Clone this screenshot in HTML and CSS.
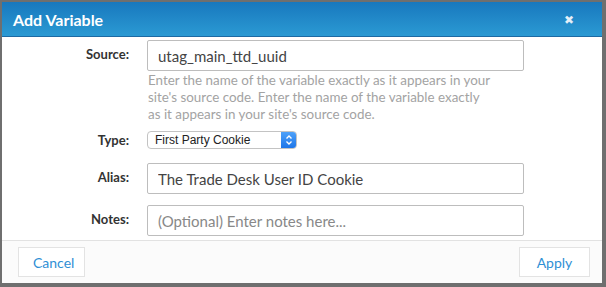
FILE: index.html
```html
<!DOCTYPE html>
<html lang="en">
  <head>
    <meta charset="UTF-8" />
    <meta name="viewport" content="width=device-width, initial-scale=1.0" />
    <title>Add Variable</title>
    <link rel="stylesheet" href="styles.css">
  </head>
  <body>
    <div class="modal">
      <div class="modal-header">
        <h1>Add Variable</h1>
        <span class="close">&#10006;</span>
      </div>
      <div class="modal-body">
        <div class="row row-source">
          <label for="source">Source:</label>
          <div class="field">
            <input type="text" id="source" value="utag_main_ttd_uuid" />
            <p class="help">Enter the name of the variable exactly as it appears in your site's source code. Enter the name of the variable exactly as it appears in your site's source code.</p>
          </div>
        </div>
        <div class="row row-type">
          <label>Type:</label>
          <div class="field">
            <div class="select">
              <span>First Party Cookie</span>
              <span class="stepper">
                <svg width="8" height="12" viewBox="0 0 8 12"><path d="M1.5 4.5 L4 2 L6.5 4.5 M1.5 7.5 L4 10 L6.5 7.5" fill="none" stroke="#fff" stroke-width="1.4"/></svg>
              </span>
            </div>
          </div>
        </div>
        <div class="row">
          <label for="alias">Alias:</label>
          <div class="field">
            <input type="text" id="alias" value="The Trade Desk User ID Cookie" />
          </div>
        </div>
        <div class="row">
          <label for="notes">Notes:</label>
          <div class="field">
            <input type="text" id="notes" placeholder="(Optional) Enter notes here..." />
          </div>
        </div>
      </div>
      <div class="modal-footer">
        <button type="button">Cancel</button>
        <button type="button">Apply</button>
      </div>
    </div>
  </body>
</html>
```

FILE: styles.css
```css
body {
  margin: 0;
  height: 287px;
  background-color: #6f6f6f;
  font-family: Lato, "Open Sans", sans-serif;
  overflow: hidden;
}
.modal {
  margin: 2px 0 0 2px;
  width: 600px;
  height: 281px;
  background-color: #fff;
  display: flex;
  flex-direction: column;
  overflow: hidden;
}
.modal-header {
  height: 34px;
  flex-shrink: 0;
  background: linear-gradient(#1878be, #2b9ad3);
  border-bottom: 1px solid #1d6aa3;
  display: flex;
  align-items: center;
  justify-content: space-between;
  padding: 0 28px 0 11px;
}
.modal-header h1 {
  margin: 0;
  color: #fff;
  font-size: 16px;
  font-weight: bold;
}
.close {
  color: #e4eff8;
  font-size: 12px;
}
.modal-body {
  flex: 1;
  padding-top: 3px;
  overflow: hidden;
}
.row {
  display: flex;
  margin-bottom: 11px;
}
.row-source {
  margin-bottom: 8px;
}
.row-type {
  margin-bottom: 14px;
}
.row label {
  width: 127px;
  flex-shrink: 0;
  text-align: right;
  padding-top: 6px;
  margin-right: 18px;
  font-size: 13px;
  font-weight: bold;
  color: #333;
}
.field {
  width: 377px;
}
.field input {
  box-sizing: border-box;
  width: 377px;
  height: 31px;
  margin: 0;
  border: 1px solid #bdbdbd;
  border-radius: 2px;
  padding: 0 10px;
  font-family: Lato, "Open Sans", sans-serif;
  font-size: 15px;
  color: #444;
}
.field input::placeholder {
  color: #888;
}
.help {
  max-width: 347px;
  margin: 1px 0 0 1px;
  font-size: 13.4px;
  line-height: 17px;
  color: #a3a3a3;
}
.row-type label {
  padding-top: 1px;
}
.select {
  box-sizing: border-box;
  width: 150px;
  height: 18px;
  border: 1px solid #c3c3c3;
  border-radius: 4px;
  display: flex;
  align-items: center;
  justify-content: space-between;
  padding-left: 7px;
  font-family: "Liberation Sans", sans-serif;
  font-size: 12px;
  color: #222;
  overflow: hidden;
}
.stepper {
  width: 15px;
  height: 18px;
  background: linear-gradient(#50a4fb, #1a73e8);
  display: flex;
  align-items: center;
  justify-content: center;
}
.modal-footer {
  height: 42px;
  flex-shrink: 0;
  border-top: 1px solid #e2e2e2;
  background-color: #fbfbfb;
  display: flex;
  align-items: center;
  justify-content: space-between;
  padding: 0 12px 0 16px;
}
.modal-footer button {
  height: 30px;
  padding: 0 14px;
  border: 1px solid #e3e3e3;
  background-color: #fff;
  color: #2f8fd5;
  font-family: Lato, "Open Sans", sans-serif;
  font-size: 14px;
}
.modal-footer button:first-child {
  width: 67px;
}
.modal-footer button:last-child {
  width: 71px;
}
```
